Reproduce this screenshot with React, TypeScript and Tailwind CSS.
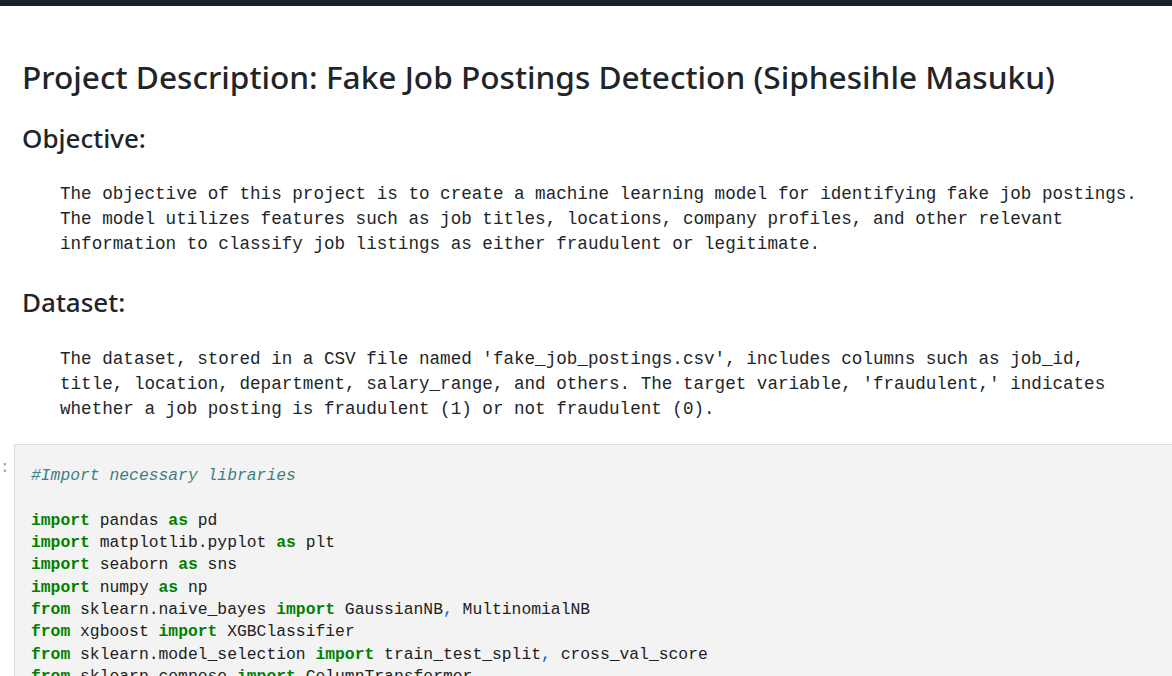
const mono = "font-['Liberation_Mono','DejaVu_Sans_Mono',monospace]";
const sans = "font-['Noto_Sans','Open_Sans',sans-serif]";

const objective = [
  'The objective of this project is to create a machine learning model for identifying fake job postings.',
  'The model utilizes features such as job titles, locations, company profiles, and other relevant',
  'information to classify job listings as either fraudulent or legitimate.',
];

const dataset = [
  "The dataset, stored in a CSV file named 'fake_job_postings.csv', includes columns such as job_id,",
  "title, location, department, salary_range, and others. The target variable, 'fraudulent,' indicates",
  'whether a job posting is fraudulent (1) or not fraudulent (0).',
];

type Tok = [string, 'k' | 't' | 'p'];

const code: Tok[][] = [
  [['import', 'k'], [' pandas ', 't'], ['as', 'k'], [' pd', 't']],
  [['import', 'k'], [' matplotlib.pyplot ', 't'], ['as', 'k'], [' plt', 't']],
  [['import', 'k'], [' seaborn ', 't'], ['as', 'k'], [' sns', 't']],
  [['import', 'k'], [' numpy ', 't'], ['as', 'k'], [' np', 't']],
  [['from', 'k'], [' sklearn.naive_bayes ', 't'], ['import', 'k'], [' GaussianNB', 't'], [',', 'p'], [' MultinomialNB', 't']],
  [['from', 'k'], [' xgboost ', 't'], ['import', 'k'], [' XGBClassifier', 't']],
  [['from', 'k'], [' sklearn.model_selection ', 't'], ['import', 'k'], [' train_test_split', 't'], [',', 'p'], [' cross_val_score', 't']],
  [['from', 'k'], [' sklearn.compose ', 't'], ['import', 'k'], [' ColumnTransformer', 't']],
];

function Para({ lines }: { lines: string[] }) {
  return (
    <div className={`${mono} pl-[60px] text-[17.6px] leading-[25px] text-[#212529] whitespace-pre`}>
      {lines.map((l) => (
        <div key={l}>{l}</div>
      ))}
    </div>
  );
}

export default function App() {
  return (
    <div className="w-[1172px] h-[676px] overflow-hidden bg-white relative">
      {/* top toolbar edge */}
      <div className="h-[6px] bg-[#1b1f26]" />

      <div className={`${sans} text-[#212529]`}>
        <h1 className="pl-[22px] mt-[51px] text-[31.6px] leading-[40px] font-medium">
          Project Description: Fake Job Postings Detection (Siphesihle Masuku)
        </h1>
        <h2 className="pl-[22px] mt-[25px] text-[26px] leading-[32px] font-medium">Objective:</h2>
      </div>

      <div className="mt-[28px]">
        <Para lines={objective} />
      </div>

      <h2 className={`${sans} text-[#212529] pl-[22px] mt-[29px] text-[26px] leading-[32px] font-medium`}>
        Dataset:
      </h2>

      <div className="mt-[29px]">
        <Para lines={dataset} />
      </div>

      {/* code cell */}
      <div className="relative mt-[22px] ml-[14px]">
        <span className={`${mono} absolute left-[-14px] top-[12px] text-[16px] text-[#9aa0a6]`}>:</span>
        <div className={`${mono} border-t border-l border-[#dcdcdc] bg-[#f3f3f3] pl-[16px] pt-[20px] pb-4 text-[16.35px] leading-[22.35px] text-[#212121] whitespace-pre`}>
          <div className="italic text-[#3d7f7f]">#Import necessary libraries</div>
          <div>&nbsp;</div>
          {code.map((line, i) => (
            <div key={i}>
              {line.map(([s, t], j) => (
                <span
                  key={j}
                  className={t === 'k' ? 'font-bold text-[#008000]' : t === 'p' ? 'text-[#055be0]' : ''}
                >
                  {s}
                </span>
              ))}
            </div>
          ))}
        </div>
      </div>
    </div>
  );
}
